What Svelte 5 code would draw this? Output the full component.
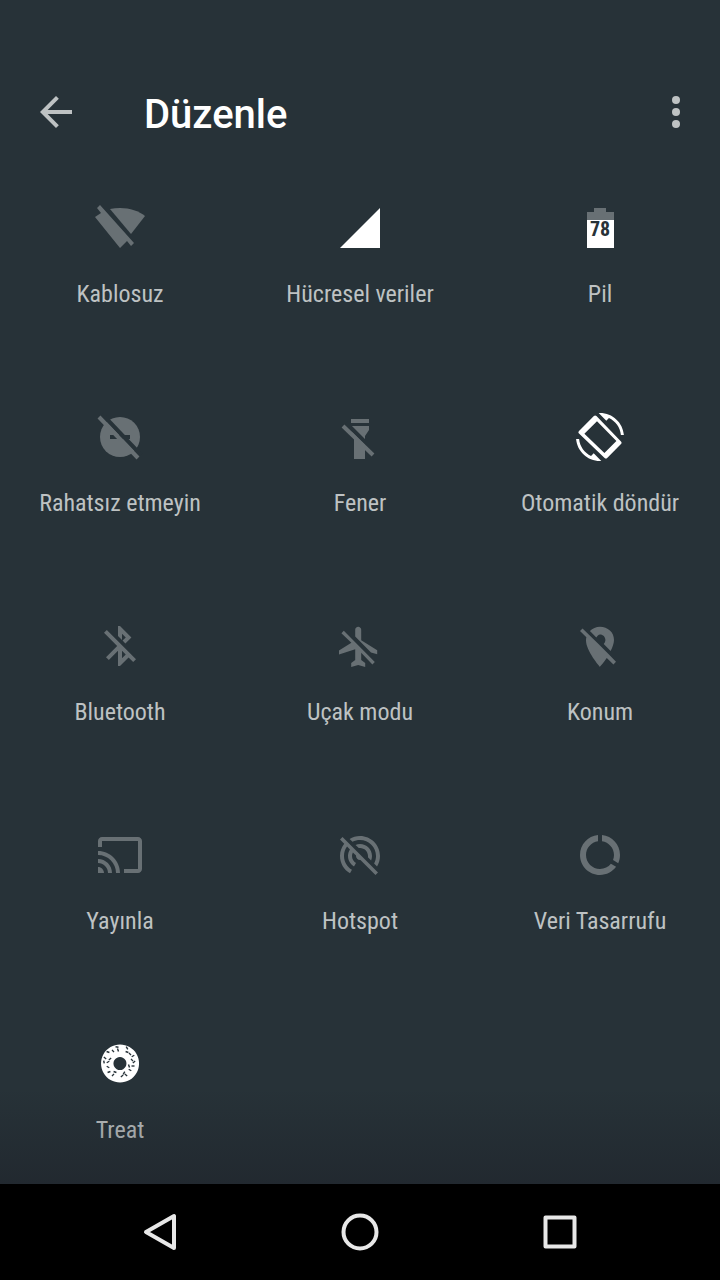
<script>
  let tiles = [
    { id: "wifi", label: "Kablosuz", on: false },
    { id: "cell", label: "Hücresel veriler", on: true },
    { id: "battery", label: "Pil", on: true },
    { id: "dnd", label: "Rahatsız etmeyin", on: false },
    { id: "flashlight", label: "Fener", on: false },
    { id: "rotate", label: "Otomatik döndür", on: true },
    { id: "bluetooth", label: "Bluetooth", on: false },
    { id: "airplane", label: "Uçak modu", on: false },
    { id: "location", label: "Konum", on: false },
    { id: "cast", label: "Yayınla", on: false },
    { id: "hotspot", label: "Hotspot", on: false },
    { id: "data", label: "Veri Tasarrufu", on: false },
    { id: "treat", label: "Treat", on: true },
  ];

  // icons on the 24 grid, drawn at double size
  const paths = {
    rotate:
      "M16.48 2.52c3.27 1.55 5.61 4.72 5.97 8.48h1.5C23.44 4.84 18.29 0 12 0l-.66.03 3.81 3.81 1.33-1.32zM10.23 1.5c-.4-.4-.9-.4-1.3 0L1.5 8.95c-.4.4-.4.9 0 1.3l12.8 12.2c.4.4.9.4 1.3 0l6.9-6.9c.4-.4.4-.9 0-1.3zM14.2 20L4.2 10.4l6.3-6.3 9.7 9.9zM7.52 21.48C4.25 19.94 1.91 16.76 1.55 13H.05C.56 19.16 5.71 24 12 24l.66-.03-3.81-3.81-1.33 1.32z",
    bluetooth:
      "M13 5.83l1.88 1.88-1.6 1.6 1.41 1.41 3.02-3.02L12 2h-1v5.03l2 2v-3.2zM5.41 4L4 5.41 10.59 12 5 17.59 6.41 19 11 14.41V22h1l4.29-4.29 2.3 2.29L20 18.59 5.41 4zM13 18.17v-3.76l1.88 1.88L13 18.17z",
    airplane:
      "M12.6 9V3.9c0-.83-.67-1.5-1.5-1.5s-1.5.67-1.5 1.5v3.4l7.9 7.9 3.1.9v-2l-8-5zM2.7 5.6l4.99 4.8L1.5 14.2v2l8.1-2.6V19l-2 1.5V22.5l3.5-1 3.5 1v-2L12.6 19v-3.6L18.2 21.2 19.4 20 3.9 4.4z",
    location:
      "M12 6.2c1.5 0 2.7 1.2 2.7 2.8 0 .74-.33 1.49-.83 1.95l3.43 3.53c.98-1.86 1.7-3.8 1.7-5.48 0-3.87-3.13-6.6-7-6.6-1.98 0-3.76.83-5.04 2.15l3.19 3.19c.46-.72 1.11-1.54 1.85-1.54zm4.37 9.9l-4.63-4.63-.11-.11L3.27 3.2 2 4.47l3.18 3.18C5.07 7.95 5 8.47 5 9.2c0 5.25 7 13.2 7 13.2s1.67-1.85 3.38-4.35L18.73 21.2 20 19.93l-3.63-3.83z",
    cast: "M21 3H3c-1.1 0-2 .9-2 2v3h2V5h18v14h-7v2h7c1.1 0 2-.9 2-2V5c0-1.1-.9-2-2-2zM1 18v3h3c0-1.66-1.34-3-3-3zm0-4v2c2.76 0 5 2.24 5 5h2c0-3.87-3.13-7-7-7zm0-4v2c4.97 0 9 4.03 9 9h2c0-6.08-4.93-11-11-11z",
    hotspot:
      "M17.56 14.74c.28-.69.44-1.45.44-2.24 0-3.31-2.69-6-6-6-.79 0-1.55.16-2.24.44l1.62 1.62c.2-.03.41-.06.62-.06 2.21 0 4 1.79 4 4 0 .21-.02.42-.05.63l1.61 1.61zM12 4.5c4.42 0 8 3.58 8 8 0 1.35-.35 2.62-.95 3.74l1.47 1.47C21.46 16.19 22 14.41 22 12.5c0-5.52-4.48-10-10-10-1.91 0-3.69.55-5.21 1.47l1.46 1.46C9.37 4.84 10.65 4.5 12 4.5zM3.27 3L2 4.27l2.1 2.1C2.79 8.07 2 10.19 2 12.5c0 3.7 2.01 6.92 4.99 8.65l1-1.73C5.61 18.03 4 15.46 4 12.5c0-1.76.57-3.38 1.53-4.69l1.43 1.44C6.36 10.18 6 11.3 6 12.5c0 2.22 1.21 4.15 3 5.19l1-1.74c-1.19-.7-2-1.97-2-3.45 0-.65.17-1.25.44-1.79l1.58 1.58L10 12.5c0 1.1.9 2 2 2l.21-.01.01.01 7.51 7.51L21 20.73 4.27 4l-1-1z",
    data: "M13 2.05v3.03c3.39.49 6 3.39 6 6.92 0 .9-.18 1.75-.48 2.54l2.6 1.53c.56-1.24.88-2.62.88-4.07 0-5.18-3.95-9.45-9-9.95zM12 19c-3.87 0-7-3.13-7-7 0-3.53 2.61-6.43 6-6.92V2.05c-5.06.5-9 4.76-9 9.95 0 5.52 4.47 10 9.99 10 3.31 0 6.24-1.61 8.06-4.09l-2.6-1.53C16.17 17.98 14.21 19 12 19z",
  };

  // x, y and angle of each sprinkle on the donut
  const sprinkles = [
    [12, 12, 20], [17, 11, 50], [21, 7, 10], [22, 10, 70], [31, 8, 60],
    [31, 12, 20], [34, 14, 50], [37, 16, -30], [9, 18, 40], [8, 22, 80],
    [12, 22, -30], [14, 19, -40], [12, 27, 30], [36, 20, 50], [38, 22, -40],
    [33, 26, 70], [34, 30, 30], [37, 26, 0], [13, 32, -20], [17, 35, -50],
    [19, 32, 20], [26, 36, -40], [28, 33, -60], [30, 35, 40],
  ];

  const toggle = (tile) => {
    tile.on = !tile.on;
    tiles = tiles;
  };
</script>

<div class="screen">
  <header>
    <button class="icon-button" aria-label="Geri">
      <svg viewBox="0 0 24 24">
        <path d="M20 11H7.83l5.59-5.59L12 4l-8 8 8 8 1.41-1.41L7.83 13H20v-2z" />
      </svg>
    </button>
    <h1>Düzenle</h1>
    <button class="icon-button" aria-label="Diğer seçenekler">
      <svg viewBox="0 0 24 24">
        <circle cx="12" cy="6" r="2" />
        <circle cx="12" cy="12" r="2" />
        <circle cx="12" cy="18" r="2" />
      </svg>
    </button>
  </header>

  <main>
    <div class="tiles">
      {#each tiles as tile}
        <button class="tile" class:on={tile.on} on:click={() => toggle(tile)}>
          {#if paths[tile.id]}
            <svg class="icon" viewBox="0 0 24 24">
              <path fill-rule="evenodd" d={paths[tile.id]} />
            </svg>
          {:else}
            <svg class="icon" viewBox="0 0 48 48">
              {#if tile.id === "wifi"}
                <path d="M14 5Q19 4 24 4C34 4 43 7 49 12L35 30z" />
                <path d="M4 1L38 39 35 42 31 37 24 44-1 13 5 9 1 4z" />
              {:else if tile.id === "cell"}
                <path d="M4 44H44V4z" />
              {:else if tile.id === "battery"}
                <path class="empty" d="M18 4H30V8H38V17H11V8H18z" />
                <path d="M11 16H38V44H11z" />
                <text x="24" y="32">78</text>
              {:else if tile.id === "dnd"}
                <circle cx="24" cy="24" r="20" />
                <path class="cut" d="M14 22H34V26H14z" />
                <path class="gap" d="M6 1L45 42" />
                <path class="slash" d="M3 4L42 45" />
              {:else if tile.id === "flashlight"}
                <path d="M15 6H33V10H15zM15 13H33V17L29 23V46H18V23L15 17z" />
                <path class="gap" d="M10 10L39 39" />
                <path class="slash" d="M7 13L37 42" />
              {:else if tile.id === "treat"}
                <path
                  fill-rule="evenodd"
                  d="M24 4.5a19 19 0 1 0 .1 0zM24 17a6.5 6.5 0 1 1-.1 0z"
                />
                {#each sprinkles as [x, y, angle]}
                  <path class="sprinkle" d="M-1.5 0H1.5" transform="translate({x} {y}) rotate({angle})" />
                {/each}
              {/if}
            </svg>
          {/if}
          <span>{tile.label}</span>
        </button>
      {/each}
    </div>
  </main>

  <nav>
    <button aria-label="Geri">
      <svg viewBox="0 0 48 48"><path d="M38 8V40L10 24z" /></svg>
    </button>
    <button aria-label="Ana ekran">
      <svg viewBox="0 0 48 48"><circle cx="24" cy="24" r="16.5" /></svg>
    </button>
    <button aria-label="Son uygulamalar">
      <svg viewBox="0 0 48 48"><rect x="9.5" y="9.5" width="29" height="29" /></svg>
    </button>
  </nav>
</div>

<style>
  :global(body) {
    margin: 0;
    background: #273238;
  }

  .screen {
    display: flex;
    flex-direction: column;
    min-height: 100vh;
    font-family: Roboto, sans-serif;
    background: #273238;
  }

  button {
    padding: 0;
    border: none;
    background: none;
    color: inherit;
    font: inherit;
    cursor: pointer;
  }

  svg {
    display: block;
    width: 48px;
    height: 48px;
    overflow: visible;
  }

  header {
    display: flex;
    align-items: center;
    padding: 56px 20px 0 32px;
    height: 112px;
  }

  .icon-button {
    fill: #bec2c3;
  }

  h1 {
    flex: 1;
    margin: 0;
    padding: 6px 0 0 64px;
    color: #fff;
    font-size: 40px;
    font-weight: 500;
    line-height: 48px;
  }

  main {
    position: relative;
    flex: 1;
    padding: 36px 0 40px;
  }

  /* shade above the navigation bar */
  main::after {
    content: "";
    position: absolute;
    left: 0;
    right: 0;
    bottom: 0;
    height: 96px;
    background: linear-gradient(transparent, rgba(24, 24, 32, 0.35));
    pointer-events: none;
  }

  .tiles {
    display: grid;
    grid-template-columns: repeat(3, 1fr);
    row-gap: 105px;
  }

  .tile {
    display: flex;
    flex-direction: column;
    align-items: center;
    gap: 28px;
    color: #bec2c3;
    font-family: "Roboto Condensed", "Liberation Sans Narrow", Roboto, sans-serif;
    font-size: 24px;
    line-height: 28px;
    white-space: nowrap;
  }

  .icon {
    fill: #687074;
    stroke: none;
  }

  .on .icon {
    fill: #fff;
  }

  .icon .empty {
    fill: #687074;
  }

  .icon .cut {
    fill: #273238;
  }

  .icon .gap {
    stroke: #273238;
    stroke-width: 4;
  }

  .icon .slash {
    stroke: #687074;
    stroke-width: 4;
  }

  .icon .sprinkle {
    stroke: #273238;
    stroke-width: 1.4;
  }

  .icon text {
    fill: #273238;
    font-size: 20px;
    font-weight: 700;
    text-anchor: middle;
  }

  nav {
    display: flex;
    justify-content: center;
    align-items: center;
    gap: 152px;
    height: 96px;
    background: #000;
  }

  nav svg {
    fill: none;
    stroke: #e8e8e8;
    stroke-width: 4;
    stroke-linejoin: round;
  }
</style>
